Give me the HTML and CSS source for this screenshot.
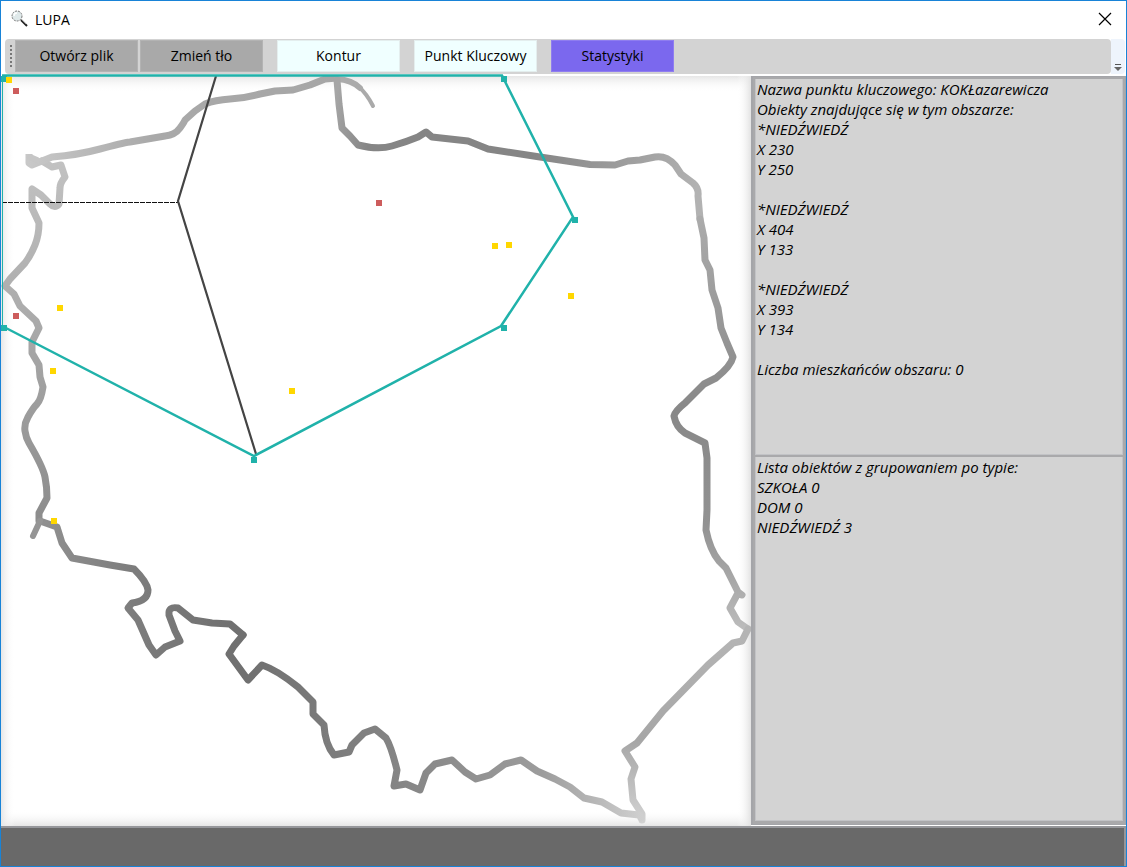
FILE: index.html
```html
<!DOCTYPE html>
<html lang="pl">
<head>
<meta charset="utf-8">
<title>LUPA</title>
<link rel="stylesheet" href="styles.css">
</head>
<body>
<div class="window">
  <header class="titlebar">
    <svg class="app-icon" width="18" height="18" viewBox="0 0 18 18" aria-hidden="true">
      <circle cx="6" cy="6" r="5" fill="#dfe9ea" stroke="#777" stroke-width="1" stroke-dasharray="2 1"/>
      <path d="M3 6a3 3 0 0 1 3-3" fill="none" stroke="#fff" stroke-width="1.5"/>
      <path d="M10 10l6 6" stroke="#222" stroke-width="2"/>
      <path d="M10 9l5 5" stroke="#999" stroke-width="1"/>
    </svg>
    <h1 class="title">LUPA</h1>
    <button class="close" type="button" aria-label="Zamknij">
      <svg width="14" height="14" viewBox="0 0 14 14"><path d="M1 1l12 12M13 1L1 13" stroke="#000" stroke-width="1.2"/></svg>
    </button>
  </header>

  <div class="tray">
    <div class="toolbar" role="toolbar">
      <span class="grip"></span>
      <button class="tool gray" type="button">Otwórz plik</button>
      <button class="tool gray" type="button">Zmień tło</button>
      <span class="gap"></span>
      <button class="tool azure" type="button">Kontur</button>
      <span class="gap"></span>
      <button class="tool azure" type="button">Punkt Kluczowy</button>
      <span class="gap"></span>
      <button class="tool violet" type="button">Statystyki</button>
    </div>
    <button class="overflow" type="button" aria-label="Więcej">
      <svg width="8" height="9" viewBox="0 0 8 9"><path d="M1 1.500h6" stroke="#555" stroke-width="1"/><path d="M0 4h8L4 8z" fill="#666"/></svg>
    </button>
  </div>

  <main class="content">
    <svg class="map" viewBox="1 74 750 752" preserveAspectRatio="xMinYMin meet" role="img" aria-label="Mapa">
      <defs>
        <linearGradient id="fadeL"><stop offset="0" stop-color="#e6e6e6"/><stop offset="1" stop-color="#fff" stop-opacity="0"/></linearGradient>
        <linearGradient id="fadeR"><stop offset="0" stop-color="#fff" stop-opacity="0"/><stop offset="1" stop-color="#e2e2e2"/></linearGradient>
        <linearGradient id="fadeT" x2="0" y2="1"><stop offset="0" stop-color="#e6e6e6"/><stop offset="1" stop-color="#fff" stop-opacity="0"/></linearGradient>
        <linearGradient id="fadeB" x2="0" y2="1"><stop offset="0" stop-color="#fff" stop-opacity="0"/><stop offset="1" stop-color="#e6e6e6"/></linearGradient>
        <linearGradient id="north" gradientUnits="userSpaceOnUse" x1="28" y1="0" x2="340" y2="0"><stop offset="0" stop-color="#c8c8c8"/><stop offset=".4" stop-color="#a9a9a9"/><stop offset="1" stop-color="#a6a6a6"/></linearGradient>
        <linearGradient id="coast" gradientUnits="userSpaceOnUse" x1="340" y1="80" x2="700" y2="180"><stop offset="0" stop-color="#a6a6a6"/><stop offset=".12" stop-color="#858585"/><stop offset=".55" stop-color="#858585"/><stop offset="1" stop-color="#b2b2b2"/></linearGradient>
        <linearGradient id="east" gradientUnits="userSpaceOnUse" x1="0" y1="180" x2="0" y2="640"><stop offset="0" stop-color="#b2b2b2"/><stop offset=".5" stop-color="#888"/><stop offset=".75" stop-color="#929292"/><stop offset="1" stop-color="#c0c0c0"/></linearGradient>
        <linearGradient id="corner" gradientUnits="userSpaceOnUse" x1="0" y1="640" x2="0" y2="822"><stop offset="0" stop-color="#b4b4b4"/><stop offset=".55" stop-color="#a6a6a6"/><stop offset="1" stop-color="#d2d2d2"/></linearGradient>
        <linearGradient id="south" gradientUnits="userSpaceOnUse" x1="240" y1="0" x2="642" y2="0"><stop offset="0" stop-color="#6f6f6f"/><stop offset=".35" stop-color="#828282"/><stop offset=".75" stop-color="#9c9c9c"/><stop offset="1" stop-color="#cfcfcf"/></linearGradient>
        <linearGradient id="southwest" gradientUnits="userSpaceOnUse" x1="33" y1="0" x2="240" y2="0"><stop offset="0" stop-color="#929292"/><stop offset=".5" stop-color="#7c7c7c"/><stop offset="1" stop-color="#6f6f6f"/></linearGradient>
        <linearGradient id="west" gradientUnits="userSpaceOnUse" x1="0" y1="160" x2="0" y2="521"><stop offset="0" stop-color="#c2c2c2"/><stop offset=".45" stop-color="#aaa"/><stop offset="1" stop-color="#8c8c8c"/></linearGradient>
        <filter id="soft" filterUnits="userSpaceOnUse" x="0" y="70" width="760" height="760"><feGaussianBlur stdDeviation=".6"/></filter>
        <clipPath id="area"><rect x="1" y="76" width="750" height="750"/></clipPath>
      </defs>
      <rect x="1" y="76" width="750" height="16" fill="url(#fadeT)"/>
      <rect x="1" y="810" width="750" height="16" fill="url(#fadeB)"/>
      <rect x="1" y="76" width="14" height="750" fill="url(#fadeL)"/>
      <rect x="737" y="76" width="14" height="750" fill="url(#fadeR)"/>

      <g fill="none" stroke-width="7" stroke-linejoin="round" stroke-linecap="round" filter="url(#soft)" clip-path="url(#area)">
        <path stroke="url(#west)" d="M42 161 52 167 61 165 65 177Q60 183 60 188L59 204Q55 209 50 204L41 195 32 189V208L39 223Q39 235 35 245T25 263L10 279 5 286 14 294 20 306 36 321 39 328 32 342V353L39 365 40 377 43 387Q41 400 37 404T28 417Q24 424 25 431T29 443Q43 467 45 477T47 498L39 513 39 521"/>
        <path stroke="url(#north)" stroke-linecap="butt" d="M29 154V163L32 165 42 161 52 157Q78 155 100 149T130 142L165 136Q175 135 180 128T185 120L195 111 205 104Q215 100 230 99T260 94L275 91 293 90 310 85 325 79 337 78"/>
        <path stroke="#c6c6c6" stroke-width="6" d="M30 157 37 160"/>
        <path stroke="#ababab" stroke-width="6" d="M337 79Q352 80 360 88"/>
        <path stroke="#aaa" stroke-width="4" d="M358 86Q367 94 373 106"/>
        <path stroke="url(#coast)" d="M337 80 339 104 342 128 350 136 358 145Q378 150 392 146T418 137L426 132 432 137 468 141 488 149 540 157 590 164.500 615 165 628 161 640 160 655 157Q666 155 675 165L681 174 693 183Q699 188 698 196L700 219"/>
        <path stroke="url(#east)" d="M700 219 704 238 705 260 710 270 712 290 718 308 721 328 727 343 733 357Q731 366 716 378L704 384 685 403Q675 411 674 416 676 427 685 433L705 443 707 458V510L706 530Q710 550 719 561L726 568 738 592 742 595 738 593 730 608 738 622 748 629"/>
        <path stroke="url(#corner)" d="M748 629 742 641 733 643 708 665 663 711 637 743 625 751 635 767 631 779 633 800 642 814V820"/>
        <path stroke="url(#south)" d="M641 818 639 815 621 813 602 802 584 798 570 787 555 779 537 771 521 760 505 764 490 775 476 779 465 772 452 760 435 764 426 773 420 790 406 784 394 786 397 770Q391 746 386 738L375 729 364 733 352 745 349 752 334 755Q325 744 324 725L313 714V702L298 687Q277 670 262 665L248 680 229 654 234 646 243 635"/>
        <path stroke="url(#southwest)" d="M243 635 230 624 212 623 193 620 178 608Q168 606 169 615L175 631 180 641 165 647 156 655 149 645 138 620 128 608 132 603Q148 601 148 590 147 582 134 569L110 565 72 558 62 543 57 527 40 521"/>
        <path stroke="#959595" stroke-width="6" d="M40 521 33 536"/>
      </g>

      <g fill="none" stroke="#444">
        <path d="M2 202.500H178" stroke-width="1" stroke="#111" stroke-dasharray="5 1"/>
        <path d="M216 76 178 201 256 454" stroke-width="2.200"/>
      </g>
      <path d="M2 75.500H502L573 217 501 326 254 456 4 327" fill="none" stroke="#20b2aa" stroke-width="2.500"/>
      <path d="M2.500 76V330" stroke="#20b2aa" stroke-width="1"/>
      <g fill="#20b2aa">
        <rect x="1" y="76" width="6" height="6"/>
        <rect x="501" y="76" width="6" height="6"/>
        <rect x="572" y="217" width="6" height="6"/>
        <rect x="501" y="325" width="6" height="6"/>
        <rect x="251" y="457" width="6" height="6"/>
        <rect x="1" y="325" width="6" height="6"/>
      </g>
      <g fill="#ffd700">
        <rect x="6" y="77" width="6" height="6"/>
        <rect x="57" y="305" width="6" height="6"/>
        <rect x="50" y="368" width="6" height="6"/>
        <rect x="51" y="518" width="6" height="6"/>
        <rect x="289" y="388" width="6" height="6"/>
        <rect x="492" y="243" width="6" height="6"/>
        <rect x="506" y="242" width="6" height="6"/>
        <rect x="568" y="293" width="6" height="6"/>
      </g>
      <g fill="#cd5c5c">
        <rect x="13" y="88" width="6" height="6"/>
        <rect x="13" y="313" width="6" height="6"/>
        <rect x="376" y="200" width="6" height="6"/>
      </g>
    </svg>

    <aside class="stats">
      <section class="pane details">Nazwa punktu kluczowego: KOKŁazarewicza
Obiekty znajdujące się w tym obszarze:
*NIEDŹWIEDŹ
X 230
Y 250

*NIEDŹWIEDŹ
X 404
Y 133

*NIEDŹWIEDŹ
X 393
Y 134

Liczba mieszkańców obszaru: 0</section>
      <section class="pane summary">Lista obiektów z grupowaniem po typie:
SZKOŁA 0
DOM 0
NIEDŹWIEDŹ 3</section>
    </aside>
  </main>
  <footer class="status"></footer>
</div>
</body>
</html>
```
FILE: styles.css
```css
* { box-sizing: border-box; }

body {
  margin: 0;
  background: #fff;
  color: #000;
  font-family: "Open Sans", "Noto Sans", sans-serif;
  font-size: 15px;
}

button {
  padding: 0;
  border: 0;
  background: none;
  color: inherit;
  font: inherit;
}

.window {
  display: flex;
  flex-direction: column;
  min-height: 100vh;
  border: 1px solid #1883d7;
}

.titlebar {
  display: flex;
  align-items: center;
  height: 38px;
  padding: 0 14px 2px 10px;
}

.title {
  margin: 0 auto 0 6px;
  font-size: 14px;
  font-weight: 400;
}

.close { display: flex; }

.tray {
  display: flex;
  height: 35px;
  padding: 0 1px 0 4px;
}

.toolbar {
  display: flex;
  flex: 1;
  align-items: center;
  gap: 2px;
  padding: 0 0 2px 4px;
  border-radius: 4px;
  background: #d3d3d3;
}

.grip {
  width: 4px;
  height: 24px;
  background: radial-gradient(circle, #777 1px, transparent 1px) 0 0 / 4px 4px;
}

.gap { width: 10px; }

.tool {
  width: 123px;
  height: 32px;
  border: 1px solid #b3b3b3;
  font-size: 14px;
}

.gray { background: #a9a9a9; }
.azure { border-color: #e4eeee; background: #f0ffff; }
.violet { border-color: #8f7df0; background: #7b68ee; }

.overflow {
  display: flex;
  align-items: flex-end;
  justify-content: center;
  width: 14px;
  padding-bottom: 2px;
  border-radius: 0 4px 4px 0;
  background: #eef4fc;
}

.content {
  display: grid;
  flex: 1;
  grid-template-columns: 2fr 1fr;
}

.map {
  display: block;
  width: 100%;
}

.stats {
  display: flex;
  flex-direction: column;
  gap: 2px;
  margin: 2px 0 1px;
  padding: 2px 2px 3px;
  border: 1px solid #a4a5a9;
  border-left-width: 2px;
  background: #a9a9ab;
}

.pane {
  padding: 0 1px;
  border: 1px solid #c2c3c6;
  border-top: 0;
  background: #d3d3d3;
  font-style: italic;
  line-height: 20px;
  white-space: pre-line;
}

.details { flex: 376 0 0; }
.summary { flex: 364 0 0; }

.status {
  height: 40px;
  border: 2px solid #96979b;
  border-width: 2px 2px 0 0;
  background: #696969;
}
```
